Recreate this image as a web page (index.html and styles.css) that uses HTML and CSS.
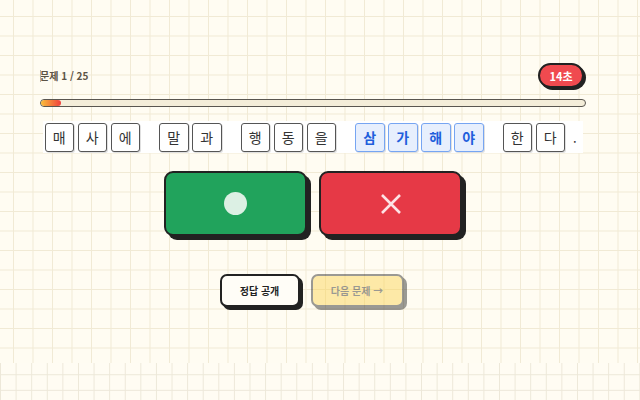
FILE: index.html
```html
<!DOCTYPE html>
<html lang="ko">
<head>
<meta charset="utf-8">
<title>맞춤법 퀴즈</title>
<link rel="stylesheet" href="styles.css">
</head>
<body>
<div class="page">
  <div class="quiz">
    <div class="header">
      <span class="counter">문제 1 / 25</span>
      <span class="timer">14초</span>
    </div>
    <div class="progress"><div class="fill" style="width:20px"></div></div>
    <div class="sentence">
      <span class="word"><span class="tile">매</span><span class="tile">사</span><span class="tile">에</span></span>
      <span class="word"><span class="tile">말</span><span class="tile">과</span></span>
      <span class="word"><span class="tile">행</span><span class="tile">동</span><span class="tile">을</span></span>
      <span class="word"><span class="tile hl">삼</span><span class="tile hl">가</span><span class="tile hl">해</span><span class="tile hl">야</span></span>
      <span class="word"><span class="tile">한</span><span class="tile">다</span><span class="period">.</span></span>
    </div>
    <div class="answers">
      <button class="answer yes" type="button"><span class="circle"></span></button>
      <button class="answer no" type="button">
        <svg width="22" height="22" viewBox="0 0 22 22"><path d="M2 2 L20 20 M20 2 L2 20" stroke="#fde3e5" stroke-width="2.6" stroke-linecap="butt" fill="none"/></svg>
      </button>
    </div>
    <div class="actions">
      <button class="btn reveal" type="button">정답 공개</button>
      <button class="btn next" type="button" disabled>다음 문제 →</button>
    </div>
  </div>
</div>
</body>
</html>
```

FILE: styles.css
```css
html {
  background-color: #fffcf3;
  background-image:
    linear-gradient(to right, #ede8d9 1px, transparent 1px),
    linear-gradient(to bottom, #ede8d9 1px, transparent 1px);
  background-size: 15.6px 15.6px;
  background-position: 0 0;
  min-height: 100%;
}

body {
  margin: 0;
  font-family: "Noto Sans CJK KR", "Noto Sans", sans-serif;
  color: #222;
}

.page {
  height: 363px;
  background-color: #fffcf2;
  background-image:
    linear-gradient(to right, #f1ead5 1px, transparent 1px),
    linear-gradient(to bottom, #f1ead5 1px, transparent 1px);
  background-size: 19.5px 19.5px;
  background-position: 13px 16px;
  padding-top: 63px;
  box-sizing: border-box;
}

.quiz {
  margin-left: 40px;
  width: 546px;
  display: flex;
  flex-direction: column;
}

.header {
  height: 27px;
  display: flex;
  align-items: flex-start;
  justify-content: space-between;
  position: relative;
}

.counter {
  font-size: 10px;
  font-weight: 700;
  color: #5b5346;
  line-height: 25px;
  position: relative;
}

.counter::before {
  content: "";
  position: absolute;
  left: 0;
  top: 7px;
  width: 1px;
  height: 12px;
  background: #b5b0a6;
}

.timer {
  width: 46px;
  height: 25px;
  box-sizing: border-box;
  margin-right: 2px;
  border: 2px solid #222;
  border-radius: 13px;
  background: #f04a4f;
  box-shadow: 2px 2px 0 #222;
  color: #fff;
  font-size: 11px;
  font-weight: 700;
  display: flex;
  align-items: center;
  justify-content: center;
}

.progress {
  margin-top: 9px;
  height: 8px;
  box-sizing: border-box;
  border: 1.5px solid #5a5650;
  border-radius: 5px;
  background: #f4edd9;
  overflow: hidden;
}

.fill {
  height: 100%;
  border-radius: 4px;
  background: linear-gradient(to right, #f9bd3a, #f0403e);
}

.sentence {
  margin-top: 14px;
  margin-left: 3px;
  align-self: flex-start;
  display: flex;
  gap: 19px;
  background: #fff;
  padding: 1.5px 0 1.5px 1.5px;
}

.word {
  display: flex;
  gap: 3.5px;
}

.tile {
  width: 29.5px;
  height: 29px;
  box-sizing: border-box;
  border: 1.5px solid #555;
  border-radius: 3px;
  background: #fff;
  box-shadow: 1px 1px 0 rgba(0, 0, 0, 0.12);
  display: flex;
  align-items: center;
  justify-content: center;
  font-size: 14px;
  color: #333;
}

.tile.hl {
  background: #e7effd;
  border-color: #76a5f2;
  color: #1f5fdc;
  font-weight: 700;
}

.period {
  margin-left: 4.5px;
  width: 10px;
  line-height: 29px;
  font-size: 13px;
  color: #333;
}

.answers {
  margin-top: 18px;
  display: flex;
  justify-content: center;
  gap: 12px;
}

.answer {
  width: 143px;
  height: 65px;
  box-sizing: border-box;
  border: 2px solid #222;
  border-radius: 9px;
  box-shadow: 4px 4px 0 #222;
  display: flex;
  align-items: center;
  justify-content: center;
  padding: 0;
  cursor: pointer;
}

.answer.yes {
  background: #21a35c;
}

.answer.no {
  background: #e63946;
}

.circle {
  width: 23px;
  height: 23px;
  border-radius: 50%;
  background: #dcf0e4;
}

.actions {
  margin-top: 38px;
  display: flex;
  justify-content: center;
  gap: 11px;
  padding-right: 3px;
}

.btn {
  height: 33px;
  box-sizing: border-box;
  border: 2px solid #222;
  border-radius: 7px;
  box-shadow: 3px 3px 0 #222;
  font-family: "Noto Sans CJK KR", "Noto Sans", sans-serif;
  font-size: 10px;
  font-weight: 700;
  color: #222;
  padding: 0;
}

.reveal {
  width: 80px;
  background: #fffdf7;
}

.next {
  width: 93px;
  background: #fcd34d;
  opacity: 0.45;
}
```
